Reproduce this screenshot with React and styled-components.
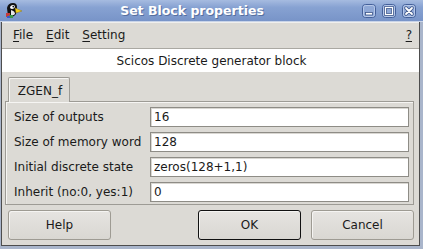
import styled, { createGlobalStyle } from 'styled-components';

const GlobalStyle = createGlobalStyle`
  body {
    margin: 0;
    padding: 0;
    font-family: 'DejaVu Sans', 'Liberation Sans', sans-serif;
    font-size: 12px;
    color: #1a1a1a;
  }
`;

const Window = styled.div`
  width: 423px;
  height: 249px;
  box-sizing: border-box;
  display: flex;
  flex-direction: column;
  background: #a9b5cb;
  overflow: hidden;
`;

const TitleBar = styled.div`
  height: 22px;
  flex: none;
  display: flex;
  align-items: center;
  padding: 0 7px 0 5px;
  box-sizing: border-box;
  background: linear-gradient(to bottom, #a6bbe0 0%, #87a2d2 35%, #7894c8 100%);
  border-bottom: 1px solid #c9d4e8;
`;

const Title = styled.div`
  flex: 1;
  text-align: center;
  font-weight: bold;
  font-size: 12.5px;
  color: #ffffff;
  text-shadow: 1px 1px 0 #566f9f;
  padding-right: 1px;
`;

const WinButtons = styled.div`
  display: flex;
  gap: 6px;
`;

const Client = styled.div`
  flex: 1;
  margin: 0 3px 3px 1px;
  display: flex;
  flex-direction: column;
  background: #dcdad5;
  border: 1px solid #4d4d4d;
  border-top: none;
`;

const MenuBar = styled.div`
  height: 26px;
  display: flex;
  align-items: center;
  padding: 0 0 0 5px;
  border-bottom: 1px solid #aaa8a2;
  box-shadow: inset 0 1px 0 #f0efed;
`;

const MenuItem = styled.div`
  padding: 0 6px;
  margin-right: 1px;
  margin-left: ${p => (p.$right ? 'auto' : '0')};
`;

const Key = styled.span`
  text-decoration: underline;
  text-underline-offset: 2px;
`;

const Info = styled.div`
  height: 23px;
  display: flex;
  align-items: center;
  justify-content: center;
  background: #ffffff;
  padding-left: 2px;
`;

const Body = styled.div`
  flex: 1;
  display: flex;
  flex-direction: column;
  padding: 5px 5px 5px 3px;
`;

const Tabs = styled.div`
  display: flex;
  padding-left: 3px;
  margin-bottom: -1px;
  position: relative;
  z-index: 1;
`;

const Tab = styled.div`
  width: 62px;
  height: 25px;
  box-sizing: border-box;
  display: flex;
  align-items: center;
  justify-content: center;
  padding-top: 2px;
  padding-left: 2px;
  background: #dcdad5;
  border: 1px solid #9d9b95;
  border-bottom: none;
  border-radius: 2px 2px 0 0;
  box-shadow: inset 1px 1px 0 #f6f5f3;
`;

const Panel = styled.div`
  display: flex;
  flex-direction: column;
  gap: 5px;
  padding: 5px 4px 2px 7px;
  border: 1px solid #9d9b95;
  box-shadow: inset 1px 1px 0 #f6f5f3;
`;

const Row = styled.div`
  display: grid;
  grid-template-columns: 137px 1fr;
  align-items: center;
  height: 20px;
`;

const Label = styled.div`
  padding-left: 1px;
`;

const Field = styled.div`
  height: 20px;
  box-sizing: border-box;
  background: #ffffff;
  border: 1px solid #8e8c86;
  box-shadow: inset 1px 1px 0 #d9d7d2;
  padding: 0 3px;
  display: flex;
  align-items: center;
`;

const ButtonRow = styled.div`
  display: flex;
  margin-top: 5px;
  padding-left: 3px;
  gap: 10px;
`;

const Button = styled.div`
  width: 103px;
  height: 30px;
  box-sizing: border-box;
  display: flex;
  align-items: center;
  justify-content: center;
  margin-left: ${p => (p.$push ? 'auto' : '0')};
  border: 1px solid ${p => (p.$default ? '#111111' : '#9e9b93')};
  border-radius: 3px;
  background: linear-gradient(to bottom, #e6e4e1, #d9d7d2);
  box-shadow: inset 1px 1px 0 #f5f4f2;
`;

const Puffin = () => (
  <svg width="18" height="17" viewBox="0 0 18 17">
    <path d="M3 14 L2 6 Q3 1 8 1 Q12 1 12 5 L11 12 Q9 15 5 15 Z" fill="#111" />
    <path d="M5 5 Q6 3 8 3 Q10 3 10 5 Q9 7 7 7 Q5 7 5 5 Z" fill="#fff" />
    <path d="M10 6 L17 9 L11 11 Z" fill="#f2d21c" stroke="#8a6a00" strokeWidth="0.4" />
    <path d="M6 8 Q10 9 10 12 Q8 14 6 13 Z" fill="#e8e8e8" />
    <circle cx="8.3" cy="4.6" r="0.9" fill="#111" />
    <rect x="1" y="11" width="4" height="4" fill="#c83a3a" />
    <rect x="4" y="13" width="4" height="3" fill="#3a9a4a" />
    <rect x="2" y="14" width="3" height="2" fill="#3a5ac8" />
  </svg>
);

const WinBtn = ({ kind }) => (
  <svg width="14" height="14" viewBox="0 0 14 14">
    <rect x="0.5" y="0.5" width="13" height="13" rx="3" fill="#8fa8d6" stroke="#44609a" />
    <rect x="1.5" y="1.5" width="11" height="11" rx="2" fill="none" stroke="#b7c8e8" />
    {kind === 'min' && (
      <rect x="3.5" y="8.5" width="7" height="2.5" fill="#fff" stroke="#3d5588" strokeWidth="0.8" />
    )}
    {kind === 'max' && (
      <rect x="3.5" y="3.5" width="7" height="7" fill="none" stroke="#3d5588" strokeWidth="2.6" />
    )}
    {kind === 'max' && (
      <rect x="3.5" y="3.5" width="7" height="7" fill="none" stroke="#fff" strokeWidth="1.2" />
    )}
    {kind === 'close' && (
      <path d="M4 4 L10 10 M10 4 L4 10" stroke="#3d5588" strokeWidth="3.4" strokeLinecap="round" />
    )}
    {kind === 'close' && (
      <path d="M4 4 L10 10 M10 4 L4 10" stroke="#fff" strokeWidth="1.8" strokeLinecap="round" />
    )}
  </svg>
);

const fields = [
  ['Size of outputs', '16'],
  ['Size of memory word', '128'],
  ['Initial discrete state', 'zeros(128+1,1)'],
  ['Inherit (no:0, yes:1)', '0'],
];

const App = () => (
  <Window>
    <GlobalStyle />
    <TitleBar>
      <Puffin />
      <Title>Set Block properties</Title>
      <WinButtons>
        <WinBtn kind="min" />
        <WinBtn kind="max" />
        <WinBtn kind="close" />
      </WinButtons>
    </TitleBar>
    <Client>
      <MenuBar>
        <MenuItem><Key>F</Key>ile</MenuItem>
        <MenuItem><Key>E</Key>dit</MenuItem>
        <MenuItem><Key>S</Key>etting</MenuItem>
        <MenuItem $right><Key>?</Key></MenuItem>
      </MenuBar>
      <Info>Scicos Discrete generator block</Info>
      <Body>
        <Tabs>
          <Tab>ZGEN_f</Tab>
        </Tabs>
        <Panel>
          {fields.map(([label, value]) => (
            <Row key={label}>
              <Label>{label}</Label>
              <Field>{value}</Field>
            </Row>
          ))}
        </Panel>
        <ButtonRow>
          <Button>Help</Button>
          <Button $push $default>OK</Button>
          <Button>Cancel</Button>
        </ButtonRow>
      </Body>
    </Client>
  </Window>
);

export default App;
